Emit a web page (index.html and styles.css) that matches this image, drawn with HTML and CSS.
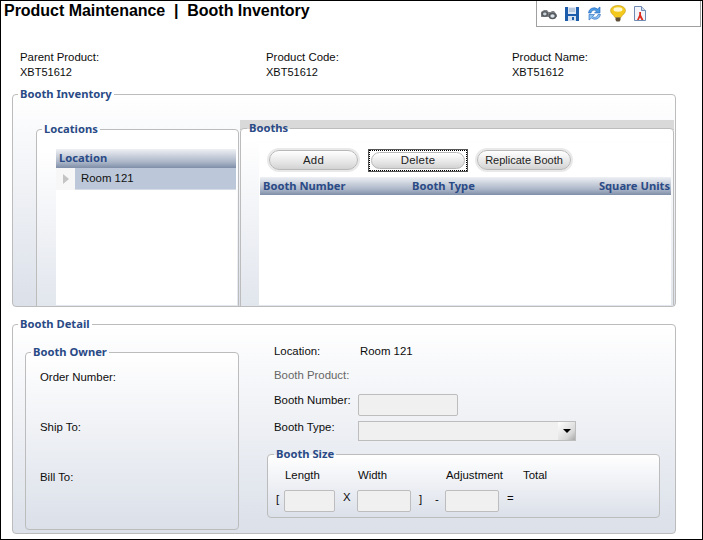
FILE: index.html
```html
<!DOCTYPE html>
<html lang="en">
<head>
<meta charset="utf-8">
<title>Product Maintenance | Booth Inventory</title>
<link rel="stylesheet" href="styles.css">
</head>
<body>
<div class="page">
  <header class="top">
    <h1 class="title">Product Maintenance &nbsp;|&nbsp; Booth Inventory</h1>
    <div class="toolbar">
      <svg class="ic" width="16" height="12" viewBox="0 0 16 12"><path d="M0 4l3-2h3l1.500 2h2L11 3h2l3 4v2H0z" fill="#7d8185"/><ellipse cx="3.800" cy="6" rx="3.300" ry="2.800" fill="#55595d"/><ellipse cx="11.500" cy="8" rx="3.800" ry="3.300" fill="#55595d"/><ellipse cx="3.800" cy="6" rx="1.800" ry="1.400" fill="#c9d2d8"/><ellipse cx="11.500" cy="8" rx="2.200" ry="1.800" fill="#d9e2e8"/></svg>
      <svg class="ic" width="14" height="14" viewBox="0 0 14 14"><path d="M0 0h14v14H0z" fill="#1c5cab"/><path d="M3 0h8v7H3z" fill="#dfe8f3"/><path d="M4 2h6M4 4h6" stroke="#8fa9c9"/><path d="M3 9h8v5H3z" fill="#d9e3ef"/><path d="M7 10h2v3H7z" fill="#1c5cab"/></svg>
      <svg class="ic" width="15" height="15" viewBox="0 0 15 15"><path d="M1.500 7a5.500 5.500 0 0 1 9-4L13 1v6H7.500l2-2a3.300 3.300 0 0 0-5.500 2z" fill="#4c9ae3" stroke="#1b62b8" stroke-width=".6"/><path d="M13.500 8.500a5.500 5.500 0 0 1-9 3.500L2 14V8.500h5.500l-2 2a3.300 3.300 0 0 0 5.500-2z" fill="#8cc3f2" stroke="#1b62b8" stroke-width=".6"/></svg>
      <svg class="ic" width="16" height="17" viewBox="0 0 16 17"><path d="M.5 5.500C.5 2.500 4 .5 8 .5s7.500 2 7.500 5c0 3-3 4-4.500 7H5c-1.500-3-4.500-4-4.500-7z" fill="#f2c91c" stroke="#b98f10" stroke-width=".5"/><ellipse cx="8" cy="4.500" rx="4.500" ry="2.200" fill="#fdf8cf"/><path d="M5.500 12.500h5V15L9.500 16.500h-3L5.500 15z" fill="#5f5136"/></svg>
      <svg class="ic" width="12" height="15" viewBox="0 0 12 15"><path d="M.5.500h7l4 4v10H.5z" fill="#f3f5fa" stroke="#6f8ab3"/><path d="M7.500.500v4h4" fill="#cdd8e8" stroke="#6f8ab3"/><path d="M3 14l2.200-5V6h1.800v3L9.500 14H7.500L6 11.500 4.700 14z" fill="#dd2a1f"/></svg>
    </div>
  </header>

  <section class="meta">
    <div class="meta-item"><div>Parent Product:</div><div class="val">XBT51612</div></div>
    <div class="meta-item"><div>Product Code:</div><div class="val">XBT51612</div></div>
    <div class="meta-item"><div>Product Name:</div><div class="val">XBT51612</div></div>
  </section>

  <fieldset class="group inventory">
    <legend>Booth Inventory</legend>
    <div class="panes">
      <fieldset class="group locations">
        <legend>Locations</legend>
        <div class="list">
          <div class="list-head">Location</div>
          <div class="list-row">
            <span class="expander"><span class="arrow"></span></span>
            <span class="list-cell">Room 121</span>
          </div>
        </div>
      </fieldset>
      <div class="booths-wrap">
        <div class="band"></div>
        <fieldset class="group booths">
          <legend>Booths</legend>
          <div class="booth-panel">
            <div class="actions">
              <button class="btn btn-add" type="button">Add</button>
              <span class="focus"><button class="btn btn-del" type="button">Delete</button></span>
              <button class="btn btn-rep" type="button">Replicate Booth</button>
            </div>
            <div class="grid-head">
              <span class="c1">Booth Number</span>
              <span class="c2">Booth Type</span>
              <span class="c3">Square Units</span>
            </div>
          </div>
        </fieldset>
      </div>
    </div>
  </fieldset>

  <fieldset class="group detail">
    <legend>Booth Detail</legend>
    <div class="detail-cols">
      <fieldset class="group owner">
        <legend>Booth Owner</legend>
        <div class="owner-rows">
          <div>Order Number:</div>
          <div>Ship To:</div>
          <div>Bill To:</div>
        </div>
      </fieldset>
      <div class="form">
        <div class="row r-loc"><span class="lab">Location:</span><span class="room">Room 121</span></div>
        <div class="row r-prod"><span class="lab muted">Booth Product:</span></div>
        <div class="row r-num"><span class="lab">Booth Number:</span><span class="input w-num"></span></div>
        <div class="row r-type"><span class="lab">Booth Type:</span><span class="select"><span class="drop"><span class="tri"></span></span></span></div>
        <fieldset class="group size">
          <legend>Booth Size</legend>
          <div class="size-heads">
            <span class="h-len">Length</span><span class="h-wid">Width</span><span class="h-adj">Adjustment</span><span>Total</span>
          </div>
          <div class="size-inputs">
            <span class="sym s-open">[</span><span class="input w-len"></span>
            <span class="sym s-x">X</span><span class="input w-wid"></span>
            <span class="sym s-close">]</span><span class="sym s-minus">-</span><span class="input w-adj"></span>
            <span class="sym s-eq">=</span>
          </div>
        </fieldset>
      </div>
    </div>
  </fieldset>
</div>
</body>
</html>
```

FILE: styles.css
```css
* { box-sizing: border-box; }
html, body { margin: 0; padding: 0; }
body { width: 703px; height: 540px; overflow: hidden; background: #fff; }
.page {
  width: 703px; height: 540px; border: 1px solid #000;
  font: 11.4px "Liberation Sans", Arial, sans-serif; color: #0c0c0c; overflow: hidden;
}
.top { display: flex; justify-content: space-between; align-items: flex-start; height: 26px; }
.title { margin: 1px 0 0; padding-left: 3px; font: bold 16px/18px "Liberation Sans", Arial, sans-serif; color: #000; letter-spacing: -.03px; }
.toolbar {
  width: 165px; height: 26px; margin-right: 1px; border: 1px solid #a0a0a0; border-top: 0;
  display: flex; align-items: center; padding: 0 0 0 4px; gap: 8px;
}
.ic { flex: none; }
.meta { display: grid; grid-template-columns: repeat(3, 246px); padding: 23px 0 0 19px; height: 60px; }
.meta-item { line-height: 15px; }
.val { font-size: 11px; }

.group {
  margin: 0; padding: 0; min-width: 0; border: 1px solid #bcbcbc; border-radius: 4px;
  background: linear-gradient(#fff, #dbe0e9);
}
.group legend {
  padding: 0 2px; margin-left: 5px; color: #2a4a86;
  font: bold 11.2px/14px "Noto Sans", "Liberation Sans", sans-serif;
}
.inventory { margin-left: 11px; width: 664px; height: 220px; overflow: hidden; }
.panes { display: flex; padding: 21px 0 0 23px; height: 205px; overflow: hidden; align-items: flex-start; }
.locations { width: 203px; height: 220px; flex: none; background: linear-gradient(#fff 0, #fff 20px, #dbe0e9 100%); }
.list { margin: 13px 0 0 19px; width: 181px; height: 156px; background: #fff; }
.list-head {
  width: 180px; height: 19px; padding-left: 3px; color: #2a4a86;
  font: bold 11.2px/18px "Noto Sans", "Liberation Sans", sans-serif;
  background: linear-gradient(#eef0f4, #a9b4c6 70%, #7f8ea8);
}
.list-row { display: flex; width: 180px; height: 22px; }
.expander { width: 19px; background: #f7f7f7; display: flex; align-items: center; justify-content: center; }
.arrow { width: 0; height: 0; border-left: 6px solid #c4c4c4; border-top: 5px solid transparent; border-bottom: 5px solid transparent; }
.list-cell { flex: 1; background: #bcc8da; border-bottom: 1px solid #d5dce6; padding-left: 6px; line-height: 20px; color: #111; }
.booths-wrap { flex: none; margin: -2px 0 0 1px; width: 434px; }
.band { height: 10px; background: #d9d9d9; border-bottom: 1px solid #c4c4c4; }
.booths { margin-top: -9px; width: 434px; height: 220px; background: linear-gradient(#fff 0, #fff 10px, #dbe0e9 100%); }
.booths legend { margin-left: 6px; }
.booth-panel { margin: 8px 0 0 18px; width: 412px; height: 162px; background: #fff; padding-left: 1px; }
.actions { height: 34px; display: flex; align-items: center; }
.btn {
  height: 20px; padding: 0; font: 11.4px "Liberation Sans", sans-serif; color: #222; letter-spacing: .3px;
  border: 1px solid #b8b8b8; border-radius: 10px; background: linear-gradient(#fff, #e2e2e2 70%, #d2d2d2);
  box-shadow: 0 0 0 2px #e9e9e9;
}
.btn-add { width: 89px; margin-left: 9px; }
.focus { margin-left: 10px; padding: 2px; flex: none; width: 100px; height: 23px; border: 1px solid #555; outline: 1px dotted #000; outline-offset: -2px; display: flex; align-items: center; justify-content: center; }
.btn-del { width: 94px; height: 17px; box-shadow: none; }
.btn-rep { width: 94px; margin-left: 9px; font-size: 11px; letter-spacing: 0; }
.grid-head {
  display: flex; height: 18px; padding: 0 1px 0 3px; color: #2a4a86;
  font: bold 11.2px/17px "Noto Sans", "Liberation Sans", sans-serif;
  background: linear-gradient(#eef0f4, #a9b4c6 70%, #7f8ea8);
}
.c1 { width: 149px; flex: none; }
.c2 { flex: 1; }

.detail { margin: 10px 0 0 11px; width: 664px; height: 217px; }
.detail-cols { display: flex; padding: 14px 0 0 12px; }
.owner { width: 214px; height: 185px; flex: none; }
.owner-rows { padding: 11px 0 0 14px; display: flex; flex-direction: column; gap: 36px; line-height: 14px; }
.form { margin: -1px 0 0 28px; width: 393px; }
.row { display: flex; align-items: flex-start; line-height: 14px; }
.lab { width: 84px; flex: none; }
.room { margin-left: 2px; }
.muted { color: #666; }
.r-loc { height: 24px; padding-left: 7px; }
.r-prod { height: 26px; padding-left: 7px; }
.r-num { height: 27px; padding-left: 7px; }
.r-num .lab { margin-top: -1px; }
.r-type { height: 26px; padding-left: 7px; }
.r-type .lab { margin-top: -1px; }
.input { display: block; flex: none; height: 22px; border: 1px solid #bdbdbd; border-radius: 2px; background: #f0f0f0; }
.w-num { width: 100px; }
.select { display: flex; justify-content: flex-end; width: 218px; height: 20px; border: 1px solid #bdbdbd; background: #f0f0f0; }
.drop { width: 17px; background: linear-gradient(135deg, #fff, #d8d8d8 70%, #a8a8a8); display: flex; align-items: center; justify-content: center; }
.tri { width: 0; height: 0; border-top: 4px solid #000; border-left: 4px solid transparent; border-right: 4px solid transparent; }
.size { height: 71px; width: 393px; }
.size legend { margin-left: 6px; }
.size-heads { display: flex; padding: 7px 0 0 17px; height: 22px; line-height: 14px; }
.h-len { width: 73px; } .h-wid { width: 88px; } .h-adj { width: 77px; }
.size-inputs { display: flex; align-items: flex-start; padding: 7px 0 0 8px; line-height: 14px; }
.sym { flex: none; }
.s-open { width: 8px; padding-top: 2px; }
.w-len { width: 51px; }
.s-x { width: 22px; padding-left: 8px; }
.w-wid { width: 54px; }
.s-close { width: 24px; padding-left: 8px; padding-top: 2px; }
.s-minus { width: 10px; padding-top: 2px; }
.w-adj { width: 54px; margin-right: 8px; }
.s-eq { padding-top: 1px; }
```
